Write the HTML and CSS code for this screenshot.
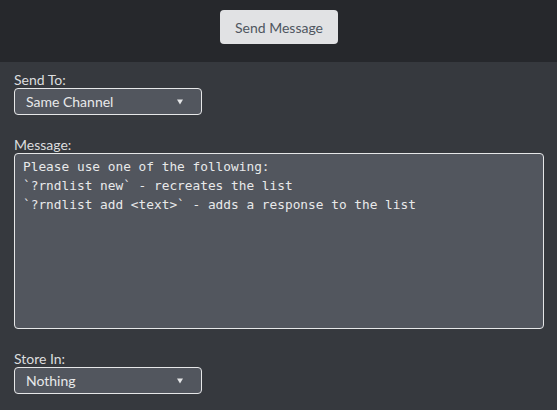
FILE: index.html
```html
<!DOCTYPE html>
<html>
<head>
<meta charset="utf-8">
<link rel="stylesheet" href="styles.css">
</head>
<body>
<header class="topbar">
  <button class="send-btn">Send Message</button>
</header>
<main class="form">
  <label class="field-label">Send To:</label>
  <div class="select-wrap">
    <select class="select"><option>Same Channel</option></select>
    <svg class="caret" width="6" height="6" viewBox="0 0 6 6"><path d="M0 0.5H6L3 5.5Z" fill="#e3e4e6"/></svg>
  </div>
  <label class="field-label gap">Message:</label>
  <textarea class="message" spellcheck="false">Please use one of the following:
`?rndlist new` - recreates the list
`?rndlist add &lt;text&gt;` - adds a response to the list</textarea>
  <label class="field-label gap">Store In:</label>
  <div class="select-wrap">
    <select class="select"><option>Nothing</option></select>
    <svg class="caret" width="6" height="6" viewBox="0 0 6 6"><path d="M0 0.5H6L3 5.5Z" fill="#e3e4e6"/></svg>
  </div>
</main>
</body>
</html>
```
FILE: styles.css
```css
html, body {
  margin: 0;
  padding: 0;
  background: #36393e;
  height: 100%;
  overflow: hidden;
}
body {
  font-family: Lato, "Liberation Sans", sans-serif;
  color: #dcddde;
}
.topbar {
  height: 62px;
  background: #26282c;
  display: flex;
  justify-content: center;
  align-items: flex-start;
  padding-top: 10px;
  box-sizing: border-box;
}
.send-btn {
  width: 118px;
  height: 34px;
  border: none;
  border-radius: 4px;
  background: #e1e2e4;
  color: #4f5660;
  font-family: Lato, "Liberation Sans", sans-serif;
  font-size: 14px;
  padding: 0;
  margin-left: 1px;
}
.form {
  display: flex;
  flex-direction: column;
  align-items: flex-start;
  padding: 9px 13px 0 14px;
}
.field-label {
  font-size: 14px;
  line-height: 17px;
  height: 17px;
  color: #dcddde;
}
.field-label.gap {
  margin-top: 21px;
}
.select-wrap {
  position: relative;
  width: 188px;
  height: 27px;
}
.select {
  appearance: none;
  -webkit-appearance: none;
  width: 188px;
  height: 27px;
  box-sizing: border-box;
  border: 1px solid #e6e7e8;
  border-radius: 4px;
  background: #52565e;
  color: #e8e9ea;
  font-family: Lato, "Liberation Sans", sans-serif;
  font-size: 14px;
  padding: 0 0 0 11px;
  margin: 0;
  outline: none;
}
.caret {
  position: absolute;
  right: 19px;
  top: 11px;
}
.message {
  width: 530px;
  height: 176px;
  box-sizing: border-box;
  border: 1px solid #e6e7e8;
  border-radius: 4px;
  background: #52565e;
  color: #e8e9ea;
  font-family: "DejaVu Sans Mono", monospace;
  font-size: 12.8px;
  line-height: 19px;
  padding: 3px 8px;
  margin: 0;
  resize: none;
  outline: none;
  overflow: hidden;
}
```
